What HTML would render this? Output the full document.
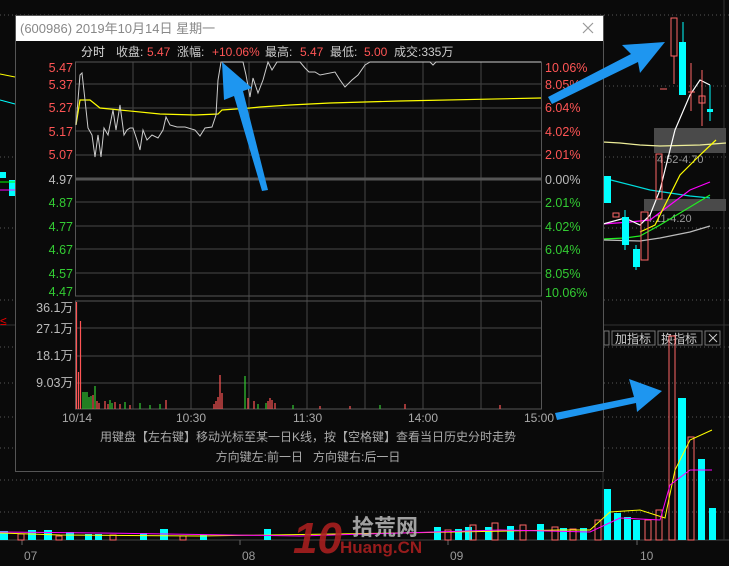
<!DOCTYPE html>
<html><head><meta charset="utf-8"><style>
html,body{margin:0;padding:0;background:#0a0a0a;width:729px;height:566px;overflow:hidden}
svg{display:block}
text{font-family:"Liberation Sans","Noto Sans CJK SC",sans-serif}
</style></head><body>
<svg width="729" height="566" viewBox="0 0 729 566" xmlns="http://www.w3.org/2000/svg">
<rect width="729" height="566" fill="#0a0a0a"/>
<g stroke="#555" stroke-dasharray="1,3" stroke-width="1">
<line x1="0" y1="15" x2="729" y2="15"/><line x1="605" y1="86" x2="729" y2="86"/>
<line x1="605" y1="157" x2="729" y2="157"/><line x1="0" y1="157" x2="15" y2="157"/>
<line x1="0" y1="228" x2="729" y2="228"/><line x1="0" y1="300" x2="729" y2="300"/>
<line x1="0" y1="347" x2="729" y2="347"/><line x1="0" y1="383" x2="729" y2="383"/>
<line x1="0" y1="417" x2="729" y2="417"/><line x1="0" y1="448" x2="729" y2="448"/>
<line x1="0" y1="480" x2="729" y2="480"/><line x1="0" y1="512" x2="729" y2="512"/>
</g>
<line x1="0" y1="325" x2="729" y2="325" stroke="#333"/>
<line x1="603" y1="40" x2="603" y2="540" stroke="#333"/>
<line x1="0" y1="540" x2="729" y2="540" stroke="#444"/>
<line x1="724" y1="0" x2="724" y2="540" stroke="#333"/>
<g fill="#999" font-size="12"><text x="24" y="560">07</text><text x="242" y="560">08</text><text x="450" y="560">09</text><text x="640" y="560">10</text></g>
<g stroke="#666"><line x1="22" y1="540" x2="22" y2="545"/><line x1="240" y1="540" x2="240" y2="545"/><line x1="448" y1="540" x2="448" y2="545"/><line x1="637" y1="540" x2="637" y2="545"/></g>
<rect x="0" y="172" width="6" height="6" fill="#0ff"/><rect x="9" y="180" width="6" height="16" fill="#0ff"/>
<line x1="0" y1="182" x2="15" y2="182" stroke="#0f0"/><line x1="0" y1="190" x2="15" y2="190" stroke="#f0f"/>
<line x1="0" y1="74" x2="15" y2="77" stroke="#ff0"/><line x1="0" y1="100" x2="15" y2="104" stroke="#0ff"/>
<text x="0" y="325" fill="#e00" font-size="12">≤</text>
<rect x="654" y="128" width="72" height="25" fill="#4a4a4a"/>
<rect x="644" y="199" width="82" height="12" fill="#4a4a4a"/>
<text x="657" y="163" fill="#999" font-size="11">4.52-4.70</text>
<text x="646" y="222" fill="#999" font-size="11">4.11-4.20</text>
<polyline points="603,142 620,143 640,145 660,146 700,145 726,143" fill="none" stroke="#ee9" stroke-width="1.2"/>
<polyline points="603,178 650,190 690,196 710,198" fill="none" stroke="#0dd" stroke-width="1.2"/>
<polyline points="603,224 630,222 650,220 670,205 690,190 710,182" fill="none" stroke="#f0f" stroke-width="1.2"/>
<polyline points="603,239 625,238 640,236 660,225 680,213 710,195" fill="none" stroke="#2e2" stroke-width="1.2"/>
<polyline points="603,240 640,241 660,238 690,232 710,226" fill="none" stroke="#bbb" stroke-width="1.2"/>
<polyline points="603,224 625,218 640,225 650,215 660,190 675,130 690,95 700,80 710,85" fill="none" stroke="#fff" stroke-width="1.2"/>
<polyline points="640,232 655,225 665,205 680,175 700,155 716,140" fill="none" stroke="#ff0" stroke-width="1.2"/>
<rect x="604" y="176" width="7" height="27" fill="#0ff"/>
<rect x="613" y="213" width="6" height="4" fill="none" stroke="#f66"/>
<rect x="622" y="217" width="7" height="28" fill="#0ff"/><line x1="625" y1="210" x2="625" y2="250" stroke="#0ff"/>
<rect x="633" y="249" width="7" height="18" fill="#0ff"/><line x1="636" y1="245" x2="636" y2="270" stroke="#0ff"/>
<rect x="641" y="212" width="7" height="48" fill="none" stroke="#f66"/>
<rect x="656" y="154" width="6" height="45" fill="none" stroke="#f66"/>
<rect x="671" y="18" width="6" height="38" fill="none" stroke="#f66"/><line x1="674" y1="56" x2="674" y2="84" stroke="#f66"/>
<rect x="679" y="42" width="7" height="53" fill="#0ff"/><line x1="683" y1="22" x2="683" y2="42" stroke="#0ff"/>
<line x1="660" y1="89" x2="667" y2="89" stroke="#f66"/>
<line x1="691" y1="63" x2="691" y2="111" stroke="#f66"/><line x1="688" y1="92" x2="695" y2="92" stroke="#f66"/>
<rect x="699" y="96" width="6" height="7" fill="none" stroke="#f66"/><line x1="702" y1="70" x2="702" y2="126" stroke="#f66"/>
<line x1="710" y1="85" x2="710" y2="121" stroke="#0ff"/><rect x="707" y="109" width="6" height="3" fill="#0ff"/>
<g fill="none" stroke="#777"><rect x="604" y="331" width="5" height="14"/><rect x="612" y="331" width="43" height="14"/><rect x="658" y="331" width="44" height="14"/><rect x="705" y="331" width="15" height="14"/></g>
<g fill="#ccc" font-size="12"><text x="615" y="343">加指标</text><text x="661" y="343">换指标</text></g>
<path d="M709 334 L717 342 M717 334 L709 342" stroke="#ccc"/>
<g fill="#0ff">
<rect x="0" y="531" width="8" height="9"/><rect x="28" y="530" width="8" height="10"/><rect x="44" y="530" width="8" height="10"/><rect x="66" y="532" width="8" height="8"/><rect x="85" y="534" width="7" height="6"/><rect x="95" y="534" width="7" height="6"/><rect x="140" y="533" width="7" height="7"/><rect x="160" y="529" width="8" height="11"/><rect x="200" y="535" width="7" height="5"/><rect x="264" y="529" width="7" height="11"/><rect x="434" y="527" width="7" height="13"/><rect x="455" y="529" width="7" height="11"/><rect x="465" y="527" width="7" height="13"/><rect x="485" y="527" width="7" height="13"/><rect x="507" y="526" width="7" height="14"/><rect x="537" y="524" width="7" height="16"/><rect x="560" y="528" width="7" height="12"/><rect x="580" y="528" width="7" height="12"/><rect x="604" y="489" width="7" height="51"/><rect x="614" y="513" width="7" height="27"/><rect x="624" y="517" width="7" height="23"/><rect x="633" y="520" width="7" height="20"/><rect x="678" y="398" width="8" height="142"/><rect x="698" y="459" width="7" height="81"/><rect x="709" y="508" width="7" height="32"/>
</g>
<g fill="none" stroke="#f66">
<rect x="18" y="534" width="6" height="6"/><rect x="56" y="536" width="6" height="4"/><rect x="110" y="535" width="6" height="5"/><rect x="180" y="536" width="6" height="4"/><rect x="445" y="530" width="6" height="10"/><rect x="470" y="525" width="6" height="15"/><rect x="492" y="523" width="6" height="17"/><rect x="520" y="525" width="6" height="15"/><rect x="552" y="527" width="6" height="13"/><rect x="570" y="529" width="6" height="11"/><rect x="595" y="520" width="6" height="20"/><rect x="645" y="520" width="6" height="20"/><rect x="656" y="510" width="6" height="30"/><rect x="669" y="336" width="6" height="204"/><rect x="688" y="437" width="6" height="103"/>
</g>
<polyline points="0,533 60,535 200,536 400,533 560,530 590,530 610,512 640,510 665,518 675,470 690,440 712,430" fill="none" stroke="#ff0"/>
<polyline points="0,532 100,533 300,536 500,530 590,532 620,518 660,520 670,485 690,470 712,470" fill="none" stroke="#f0f"/>
<g opacity="0.85"><text x="293" y="553" fill="#b02020" font-size="44" font-weight="bold" font-style="italic">10</text>
<text x="352" y="535" fill="#bbb" font-size="22" font-weight="bold">拾荒网</text>
<text x="340" y="553" fill="#b02020" font-size="17" font-weight="bold">Huang.CN</text></g>
<rect x="15.5" y="15.5" width="588" height="456" fill="#0a0a0a" stroke="#555"/>
<rect x="16" y="16" width="587" height="25" fill="#fff"/>
<text x="20" y="33" fill="#888" font-size="13">(600986) 2019年10月14日 星期一</text>
<path d="M583 23 L593 33 M593 23 L583 33" stroke="#999" stroke-width="1.2"/>
<g font-size="12"><text x="81" y="56" fill="#ddd">分时</text><text x="116" y="56" fill="#ccc">收盘:</text><text x="147" y="56" fill="#f55">5.47</text>
<text x="177" y="56" fill="#ccc">涨幅:</text><text x="212" y="56" fill="#f55">+10.06%</text><text x="265" y="56" fill="#ccc">最高:</text><text x="300" y="56" fill="#f55">5.47</text>
<text x="330" y="56" fill="#ccc">最低:</text><text x="364" y="56" fill="#f55">5.00</text><text x="394" y="56" fill="#ccc">成交:335万</text></g>
<g stroke="#3c3c3c" stroke-width="1.2">
<line x1="75" y1="84" x2="541" y2="84"/><line x1="75" y1="108" x2="541" y2="108"/><line x1="75" y1="131" x2="541" y2="131"/><line x1="75" y1="155" x2="541" y2="155"/>
<line x1="75" y1="202" x2="541" y2="202"/><line x1="75" y1="226" x2="541" y2="226"/><line x1="75" y1="249" x2="541" y2="249"/><line x1="75" y1="273" x2="541" y2="273"/>
<line x1="75" y1="328" x2="541" y2="328"/><line x1="75" y1="356" x2="541" y2="356"/><line x1="75" y1="383" x2="541" y2="383"/>
<line x1="133" y1="62" x2="133" y2="409"/><line x1="191" y1="62" x2="191" y2="409"/><line x1="249" y1="62" x2="249" y2="409"/><line x1="307" y1="62" x2="307" y2="409"/><line x1="365" y1="62" x2="365" y2="409"/><line x1="423" y1="62" x2="423" y2="409"/><line x1="481" y1="62" x2="481" y2="409"/>
</g>
<rect x="75.5" y="62" width="466" height="234" fill="none" stroke="#555"/>
<rect x="75.5" y="301" width="466" height="108" fill="none" stroke="#555"/>
<line x1="75" y1="179" x2="541" y2="179" stroke="#555" stroke-width="3"/>
<g font-size="12.5" text-anchor="end">
<text x="73" y="72" fill="#f55">5.47</text><text x="73" y="89" fill="#f55">5.37</text><text x="73" y="112" fill="#f55">5.27</text><text x="73" y="136" fill="#f55">5.17</text><text x="73" y="159" fill="#f55">5.07</text>
<text x="73" y="184" fill="#bbb">4.97</text><text x="73" y="207" fill="#3c3">4.87</text><text x="73" y="231" fill="#3c3">4.77</text><text x="73" y="254" fill="#3c3">4.67</text><text x="73" y="278" fill="#3c3">4.57</text><text x="73" y="296" fill="#3c3">4.47</text>
<text x="73" y="312" fill="#bbb">36.1万</text><text x="73" y="333" fill="#bbb">27.1万</text><text x="73" y="360" fill="#bbb">18.1万</text><text x="73" y="387" fill="#bbb">9.03万</text>
</g>
<g font-size="12.5">
<text x="545" y="72" fill="#f55">10.06%</text><text x="545" y="89" fill="#f55">8.05%</text><text x="545" y="112" fill="#f55">6.04%</text><text x="545" y="136" fill="#f55">4.02%</text><text x="545" y="159" fill="#f55">2.01%</text>
<text x="545" y="184" fill="#bbb">0.00%</text><text x="545" y="207" fill="#3c3">2.01%</text><text x="545" y="231" fill="#3c3">4.02%</text><text x="545" y="254" fill="#3c3">6.04%</text><text x="545" y="278" fill="#3c3">8.05%</text><text x="545" y="297" fill="#3c3">10.06%</text>
</g>
<polyline points="76,125 80,100 90,100 100,108 120,110 160,114 195,115 218,114 222,110 250,108 260,107 290,105 330,103 400,101 541,98" fill="none" stroke="#ff0" stroke-width="1.2"/>
<polyline points="76,125 80,75 82,73 85,100 88,128 92,135 95,157 98,135 101,157 104,128 108,135 113,110 116,130 120,105 124,135 127,130 130,128 133,128 137,140 140,150 143,130 147,140 152,135 158,138 163,130 166,117 170,125 177,127 185,127 195,130 200,136 205,128 212,127 216,115 218,80 221,62 243,62 246,75 250,97 253,78 258,93 263,80 268,62 272,70 277,62 300,62 305,68 309,72 315,72 320,75 335,72 340,80 345,87 352,80 358,75 365,65 370,62 380,62 430,62 433,65 436,62 541,62" fill="none" stroke="#ccc" stroke-width="1"/>
<g stroke-width="1.2">
<g stroke="#f55"><line x1="76.5" y1="409" x2="76.5" y2="302"/><line x1="78.5" y1="409" x2="78.5" y2="372"/><line x1="80.5" y1="409" x2="80.5" y2="321"/><line x1="93" y1="409" x2="93" y2="395"/><line x1="97" y1="409" x2="97" y2="401"/><line x1="99" y1="409" x2="99" y2="403"/><line x1="105" y1="409" x2="105" y2="401"/><line x1="108" y1="409" x2="108" y2="404"/><line x1="115" y1="409" x2="115" y2="402"/><line x1="120" y1="409" x2="120" y2="404"/><line x1="130" y1="409" x2="130" y2="405"/><line x1="166" y1="409" x2="166" y2="400"/><line x1="214" y1="409" x2="214" y2="404"/><line x1="216" y1="409" x2="216" y2="401"/><line x1="218" y1="409" x2="218" y2="397"/><line x1="220" y1="409" x2="220" y2="375"/><line x1="222" y1="409" x2="222" y2="393"/><line x1="248" y1="409" x2="248" y2="398"/><line x1="254" y1="409" x2="254" y2="401"/><line x1="268" y1="409" x2="268" y2="401"/><line x1="270" y1="409" x2="270" y2="398"/><line x1="272" y1="409" x2="272" y2="400"/><line x1="275" y1="409" x2="275" y2="403"/><line x1="320" y1="409" x2="320" y2="406"/><line x1="350" y1="409" x2="350" y2="406"/><line x1="405" y1="409" x2="405" y2="404"/><line x1="500" y1="409" x2="500" y2="405"/></g>
<g stroke="#3c3"><line x1="83" y1="409" x2="83" y2="392"/><line x1="85" y1="409" x2="85" y2="392"/><line x1="87" y1="409" x2="87" y2="392"/><line x1="89" y1="409" x2="89" y2="397"/><line x1="91" y1="409" x2="91" y2="396"/><line x1="95" y1="409" x2="95" y2="386"/><line x1="110" y1="409" x2="110" y2="400"/><line x1="112" y1="409" x2="112" y2="403"/><line x1="125" y1="409" x2="125" y2="402"/><line x1="140" y1="409" x2="140" y2="403"/><line x1="150" y1="409" x2="150" y2="405"/><line x1="160" y1="409" x2="160" y2="404"/><line x1="245" y1="409" x2="245" y2="376"/><line x1="258" y1="409" x2="258" y2="404"/><line x1="266" y1="409" x2="266" y2="403"/><line x1="293" y1="409" x2="293" y2="405"/><line x1="380" y1="409" x2="380" y2="405"/></g>
</g>
<g fill="#aaa" font-size="12"><text x="62" y="422">10/14</text><text x="176" y="422">10:30</text><text x="293" y="422">11:30</text><text x="408" y="422">14:00</text><text x="524" y="422">15:00</text></g>
<g fill="#aaa" font-size="12" text-anchor="middle"><text x="308" y="441">用键盘【左右键】移动光标至某一日K线，按【空格键】查看当日历史分时走势</text><text x="308" y="461">方向键左:前一日&#160;&#160;&#160;方向键右:后一日</text></g>
<g fill="#1e96f0">
<polygon points="222,62 252,88 243,91 268,190 262,191 234,96 224,100"/>
<polygon points="665,42 640,73 638,62 552,104 548,97 631,54 622,45"/>
<polygon points="662,391 637,412 636,403 557,420 555,413 634,397 629,379"/>
</g>
</svg>
</body></html>
